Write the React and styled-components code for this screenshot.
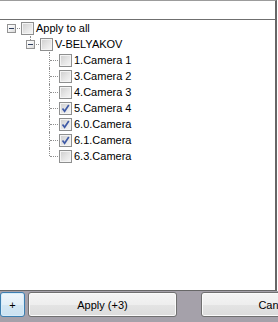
import React from 'react';
import styled, { createGlobalStyle } from 'styled-components';

const GlobalStyle = createGlobalStyle`
  html, body {
    margin: 0;
    padding: 0;
    background: #ffffff;
    overflow: hidden;
  }
  body {
    font-family: 'Liberation Sans', Arial, sans-serif;
    font-size: 11px;
    color: #000000;
  }
`;

// whole window
const Frame = styled.div`
  width: 278px;
  height: 322px;
  display: flex;
  flex-direction: column;
  background: #ffffff;
  overflow: hidden;
`;

// white panel with the tree
const Panel = styled.div`
  flex: 1;
  display: flex;
  flex-direction: column;
  margin-right: 1px;
  border-top: 1px solid #9c9c9c;
  border-right: 2px solid #676767;
  border-bottom: 1px solid #676767;
  background: #ffffff;
`;

const Header = styled.div`
  height: 18px;
  border-bottom: 1px solid #6f6f6f;
`;

const Tree = styled.div`
  display: flex;
  flex-direction: column;
  padding: 0 0 0 2px;
`;

const Row = styled.div`
  display: flex;
  align-items: center;
  height: 16px;
  padding-left: ${(p) => p.$level * 19}px;
`;

// cell holding the expander box and the dotted connector lines
const Knob = styled.div`
  position: relative;
  width: 19px;
  height: 16px;
  flex-shrink: 0;
  display: flex;
  align-items: center;
  justify-content: center;

  &::before {
    content: ${(p) => (p.$vertical ? "''" : 'none')};
    position: absolute;
    left: 9px;
    top: 0;
    bottom: ${(p) => (p.$last ? '8px' : '0')};
    border-left: 1px dotted #8f8f8f;
  }

  &::after {
    content: '';
    position: absolute;
    left: 10px;
    top: 8px;
    width: 8px;
    border-top: 1px dotted #8f8f8f;
  }
`;

const Expander = styled.div`
  position: relative;
  z-index: 1;
  width: 7px;
  height: 7px;
  border: 1px solid #939393;
  background: linear-gradient(135deg, #ffffff 0%, #f1f1f1 50%, #d8d8d8 100%);
  display: flex;
  align-items: center;
  justify-content: center;
  margin-left: -1px;
`;

const Minus = styled.span`
  width: 5px;
  height: 1px;
  background: #2f3f5f;
`;

const Box = styled.div`
  width: 11px;
  height: 11px;
  flex-shrink: 0;
  border: 1px solid #8e8f8f;
  box-shadow: inset 0 0 0 1px #f4f4f4;
  background: linear-gradient(135deg, #cdcdcd 0%, #e6e6e6 55%, #f7f7f7 100%);
  position: relative;
  display: flex;
  align-items: center;
  justify-content: center;
`;

const Label = styled.span`
  margin-left: 2px;
  white-space: nowrap;
  line-height: 16px;
`;

// bottom bar with buttons
const Footer = styled.div`
  height: 31px;
  flex-shrink: 0;
  background: #a5a1aa;
  display: flex;
  align-items: flex-start;
  padding-top: 1px;
  box-sizing: border-box;
`;

const Button = styled.button`
  height: 25px;
  width: ${(p) => p.$width}px;
  margin-left: ${(p) => p.$gap || 0}px;
  flex-shrink: 0;
  padding: 0;
  border: 1px solid ${(p) => (p.$focused ? '#3c7fb1' : '#707070')};
  border-radius: 3px;
  font-family: 'Liberation Sans', Arial, sans-serif;
  font-size: 11px;
  color: #000000;
  box-shadow: inset 0 0 0 1px ${(p) => (p.$focused ? '#d6ecf9' : '#fbfbfb')};
  background: ${(p) =>
    p.$focused
      ? 'linear-gradient(#eef6fb 0%, #e2eff8 50%, #d3e7f4 51%, #cbe2f1 100%)'
      : 'linear-gradient(#f4f4f4 0%, #eeeeee 50%, #e4e4e4 51%, #dcdcdc 100%)'};
`;

const Check = () => (
  <svg width="11" height="11" viewBox="0 0 11 11">
    <path d="M2.5 5.5 L4.6 8.2 L8.8 2" fill="none" stroke="#3f5aa6" strokeWidth="1.7" />
  </svg>
);

const nodes = [
  { label: 'Apply to all', level: 0, expander: true, vertical: false },
  { label: 'V-BELYAKOV', level: 1, expander: true, vertical: true, last: true },
  { label: '1.Camera 1', level: 2, vertical: true },
  { label: '3.Camera 2', level: 2, vertical: true },
  { label: '4.Camera 3', level: 2, vertical: true },
  { label: '5.Camera 4', level: 2, vertical: true, checked: true },
  { label: '6.0.Camera', level: 2, vertical: true, checked: true },
  { label: '6.1.Camera', level: 2, vertical: true, checked: true },
  { label: '6.3.Camera', level: 2, vertical: true, last: true },
];

const App = () => {
  return (
    <Frame>
      <GlobalStyle />
      <Panel>
        <Header />
        <Tree>
          {nodes.map((node) => (
            <Row key={node.label} $level={node.level}>
              <Knob $vertical={node.vertical} $last={node.last}>
                {node.expander && (
                  <Expander>
                    <Minus />
                  </Expander>
                )}
              </Knob>
              <Box>{node.checked && <Check />}</Box>
              <Label>{node.label}</Label>
            </Row>
          ))}
        </Tree>
      </Panel>
      <Footer>
        <Button $width={25} $focused>+</Button>
        <Button $width={149} $gap={3}>Apply (+3)</Button>
        <Button $width={149} $gap={24}>Cancel</Button>
      </Footer>
    </Frame>
  );
};

export default App;
